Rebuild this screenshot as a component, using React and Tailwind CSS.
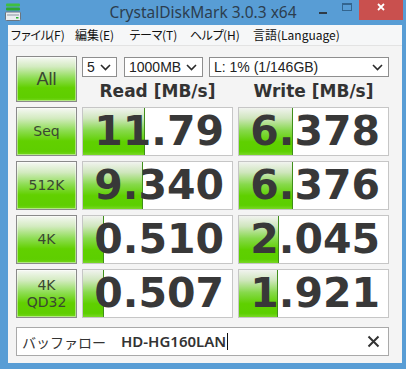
const rows = [
  { label: ['Seq'], read: '11.79', write: '6.378', rw: 62, ww: 54 },
  { label: ['512K'], read: '9.340', write: '6.376', rw: 60, ww: 54 },
  { label: ['4K'], read: '0.510', write: '2.045', rw: 21, ww: 40 },
  { label: ['4K', 'QD32'], read: '0.507', write: '1.921', rw: 21, ww: 39 },
];

const btnBg =
  'bg-[linear-gradient(to_bottom,#f6f8f4_0%,#d3ebc0_22%,#8ddd52_48%,#62d000_70%,#5fce00_92%,#74d61c_100%)]';
const barBg =
  'bg-[linear-gradient(to_bottom,#f1f3ef_0%,#cfe6bd_22%,#86d94a_48%,#5fd000_72%,#5ccf00_92%,#79d826_100%)]';

function Chevron() {
  return (
    <svg width="11" height="7" viewBox="0 0 11 7" className="shrink-0">
      <polyline points="1,1 5.5,5.5 10,1" fill="none" stroke="#2a2a2a" strokeWidth="1.6" />
    </svg>
  );
}

function Combo({ w, text }) {
  return (
    <div
      className={`${w} h-[20px] border border-[#8e8e8e] bg-white flex items-center justify-between pl-[4px] pr-[5px] text-[14px] text-[#222] font-['Liberation_Sans',sans-serif]`}
    >
      <span className="leading-none">{text}</span>
      <Chevron />
    </div>
  );
}

function GreenButton({ lines, big }) {
  return (
    <div
      className={`w-[61px] ${big ? 'h-[46px]' : 'h-[49px]'} border border-[#8a8a8a] ${btnBg} flex flex-col items-center justify-center text-[#3a4831] shadow-[inset_0_0_0_1px_rgba(255,255,255,0.45)]`}
    >
      {lines.map((l) => (
        <span
          key={l}
          className={
            big
              ? "text-[18px] leading-none font-['Liberation_Sans',sans-serif]"
              : "text-[14px] leading-[17px] font-['DejaVu_Sans',sans-serif]"
          }
        >
          {l}
        </span>
      ))}
    </div>
  );
}

function ValueCell({ value, bar }) {
  return (
    <div className="relative w-[151px] h-[49px] border border-[#c6c6c6] bg-white overflow-hidden flex items-center justify-end pr-[8px]">
      <div
        className={`absolute left-0 top-0 bottom-0 ${barBg} border-r border-[#3f8f1a]`}
        style={{ width: bar }}
      />
      <span className="relative text-[41px] leading-none font-bold text-[#383838] font-['DejaVu_Sans',sans-serif]">
        {value}
      </span>
    </div>
  );
}

export default function App() {
  return (
    <div className="w-[406px] h-[369px] bg-[#589dd5] flex flex-col overflow-hidden">
      {/* Title bar */}
      <div className="h-[25px] grid grid-cols-[1fr_auto_1fr] items-start">
        <div className="pl-[5px] pt-[3px]">
          <svg width="16" height="18" viewBox="0 0 16 18">
            <rect x="1" y="0.5" width="14" height="3" rx="1" fill="#3fbf3f" />
            <rect x="1" y="4.5" width="14" height="3" rx="1" fill="#2ea82e" />
            <rect x="0.5" y="9" width="15" height="8.5" rx="1" fill="#e9ecef" stroke="#6b7580" strokeWidth="1" />
            <rect x="2" y="11" width="12" height="2" fill="#b9c0c7" />
            <rect x="11" y="14" width="2.5" height="1.5" fill="#2fb52f" />
          </svg>
        </div>
        <div className="pt-[3px] text-[15.5px] leading-[19px] text-[#2c3d4f] font-['Noto_Sans',sans-serif] whitespace-nowrap">
          CrystalDiskMark 3.0.3 x64
        </div>
        <div className="flex justify-end items-start pr-[3px]">
          <div className="w-[24px] h-[20px] flex items-start justify-center pt-[12px]">
            <div className="w-[8px] h-[2px] bg-[#2f3b47]" />
          </div>
          <div className="w-[24px] h-[20px] flex items-start justify-center pt-[3px]">
            <div className="w-[10px] h-[8px] border border-[#33658f] border-t-2" />
          </div>
          <div className="w-[44px] h-[20px] bg-[#c9504e] flex items-start justify-center pt-[3px]">
            <svg width="8" height="8" viewBox="0 0 8 8">
              <path d="M1 1 L7 7 M7 1 L1 7" stroke="#fff" strokeWidth="1.8" />
            </svg>
          </div>
        </div>
      </div>

      {/* Client area */}
      <div className="ml-[8px] mr-[4px] mb-[6px] flex-1 bg-[#f4f4f4] flex flex-col">
        {/* Menu */}
        <div className="h-[21px] bg-[#f6f7f8] border-b border-[#e3e3e3] flex items-center pl-[2px] text-[12px] text-[#111] font-['Noto_Sans_CJK_JP','Noto_Sans',sans-serif] whitespace-nowrap">
          <span className="w-[65px] shrink-0">
            <span className="tracking-[-2px]">ファイル</span>(F)
          </span>
          <span className="w-[54px] shrink-0">編集(E)</span>
          <span className="w-[61px] shrink-0">
            <span className="tracking-[-1px]">テーマ</span>(T)
          </span>
          <span className="w-[63px] shrink-0">
            <span className="tracking-[-1px]">ヘルプ</span>(H)
          </span>
          <span className="shrink-0">言語(Language)</span>
        </div>

        {/* Main */}
        <div className="pl-[8px] pt-[10px] flex flex-col gap-[5px]">
          <div className="flex gap-[5px]">
            <GreenButton lines={['All']} big />
            <div className="flex flex-col">
              <div className="flex mt-[1px]">
                <Combo w="w-[35px]" text="5" />
                <div className="w-[7px]" />
                <Combo w="w-[79px]" text="1000MB" />
                <div className="w-[6px]" />
                <Combo w="w-[180px]" text="L: 1% (1/146GB)" />
              </div>
              <div className="flex gap-[5px] h-[25px] items-center">
                <div className="w-[151px] text-center text-[17px] font-bold text-[#333] font-['DejaVu_Sans',sans-serif] leading-none pt-[3px]">
                  Read [MB/s]
                </div>
                <div className="w-[151px] text-center text-[17px] font-bold text-[#333] font-['DejaVu_Sans',sans-serif] leading-none pt-[3px]">
                  Write [MB/s]
                </div>
              </div>
            </div>
          </div>

          {rows.map((r) => (
            <div key={r.read} className="flex gap-[5px]">
              <GreenButton lines={r.label} />
              <ValueCell value={r.read} bar={r.rw} />
              <ValueCell value={r.write} bar={r.ww} />
            </div>
          ))}

          {/* Comment */}
          <div className="mt-[4px] w-[373px] h-[29px] border border-[#a9a9a9] bg-white flex items-center pl-[5px] pr-[8px]">
            <span className="text-[14px] text-[#333] font-['Noto_Sans_CJK_JP',sans-serif] leading-none">
              バッファロー
            </span>
            <span className="ml-[15px] text-[15px] font-semibold text-[#333] font-['Noto_Sans',sans-serif] leading-none">
              HD-HG160LAN
            </span>
            <span className="ml-[1px] w-[1px] h-[17px] bg-[#111]" />
            <span className="flex-1" />
            <svg width="13" height="13" viewBox="0 0 13 13">
              <path d="M1.5 1.5 L11.5 11.5 M11.5 1.5 L1.5 11.5" stroke="#333" strokeWidth="2" />
            </svg>
          </div>
        </div>
      </div>
    </div>
  );
}
